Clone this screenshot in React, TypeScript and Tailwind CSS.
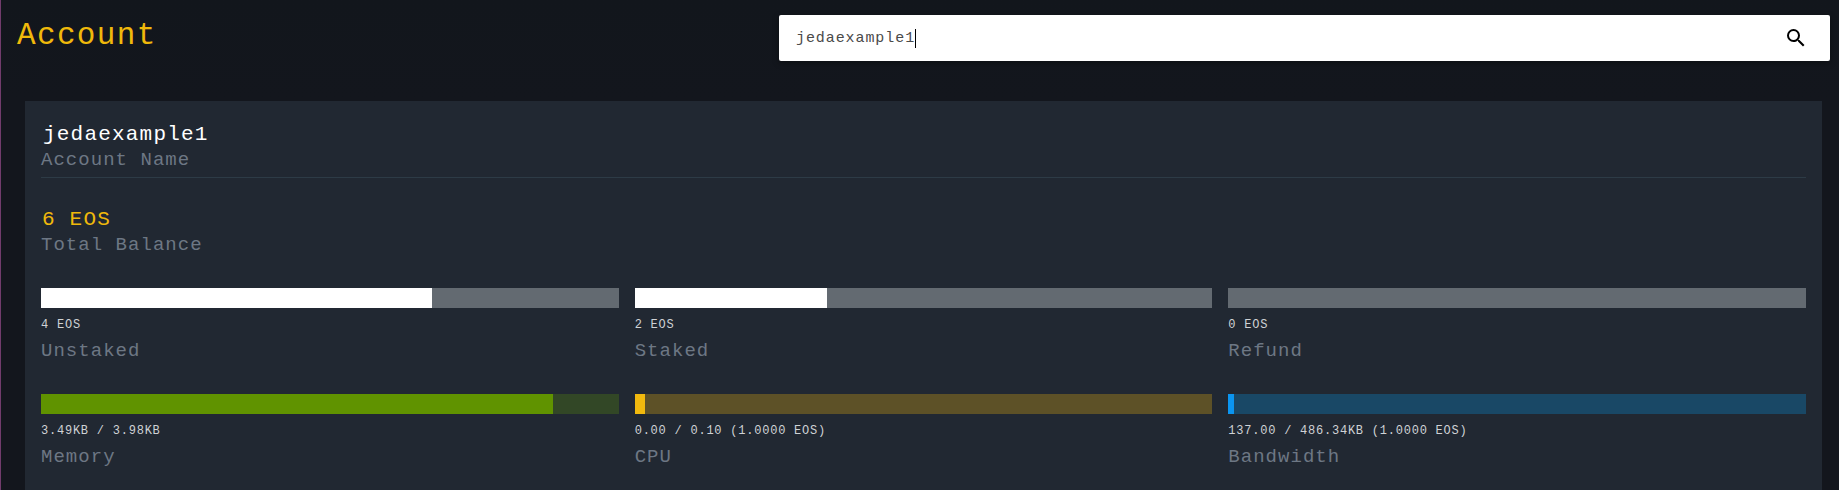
import { MdSearch } from "react-icons/md";

type Meter = {
  label: string;
  value: string;
  track: string;
  fill: string;
  width: string;
};

const meters: Meter[] = [
  { label: "Unstaked", value: "4 EOS", track: "bg-[#636a71]", fill: "bg-white", width: "w-[391px]" },
  { label: "Staked", value: "2 EOS", track: "bg-[#636a71]", fill: "bg-white", width: "w-[192px]" },
  { label: "Refund", value: "0 EOS", track: "bg-[#636a71]", fill: "bg-white", width: "w-0" },
  { label: "Memory", value: "3.49KB / 3.98KB", track: "bg-[#324726]", fill: "bg-[#609300]", width: "w-[512px]" },
  { label: "CPU", value: "0.00 / 0.10 (1.0000 EOS)", track: "bg-[#5d5127]", fill: "bg-[#f1b90e]", width: "w-[10px]" },
  { label: "Bandwidth", value: "137.00 / 486.34KB (1.0000 EOS)", track: "bg-[#194866]", fill: "bg-[#0b95f0]", width: "w-[6px]" },
];

function Label({ children }: { children: string }) {
  return (
    <div className="text-[19px] leading-[26px] tracking-[1.03px] text-[#6d7784]">{children}</div>
  );
}

function MeterCell({ meter }: { meter: Meter }) {
  return (
    <div className="h-[106px]">
      <div className={`h-5 ${meter.track}`}>
        <div className={`h-full ${meter.fill} ${meter.width}`} />
      </div>
      <div className="mt-2 text-[12px] leading-[18px] tracking-[0.77px] whitespace-pre text-[#cfd2d5]">
        {meter.value}
      </div>
      <div className="mt-1">
        <Label>{meter.label}</Label>
      </div>
    </div>
  );
}

export default function App() {
  return (
    <div className="h-[490px] overflow-hidden border-l border-[#713c6c] bg-[#13161d] font-['Courier_New','Liberation_Mono',monospace]">
      <header className="flex h-[101px] items-start justify-between bg-linear-to-b from-[#12161c] to-[#13161d] pr-[9px] pl-4">
        <h1 className="mt-4 text-[31px] leading-[40px] tracking-[1.35px] text-[#f0b90b]">Account</h1>
        <div className="mt-[15px] flex h-[46px] w-[1051px] items-center rounded-[2px] bg-white pr-[22px] pl-[17px] shadow-[0_2px_6px_rgba(0,0,0,0.4)]">
          <span className="pt-0.5 text-[15px] leading-5 tracking-[0.92px] text-[#4a4a4a]">jedaexample1</span>
          <span className="h-[19px] w-px bg-black" />
          <MdSearch className="ml-auto size-6 text-black" />
        </div>
      </header>
      <main className="mr-[17px] ml-6 h-[389px] bg-[#212832] px-4">
        <section className="h-[77px] border-b border-[#2d3b46] pt-5">
          <div className="text-[21px] leading-7 tracking-[1.2px] text-white">
            <span className="ml-0.5">jedaexample1</span>
          </div>
          <div className="-mt-0.5">
            <Label>Account Name</Label>
          </div>
        </section>
        <section className="h-[110px] pt-7">
          <div className="text-[21px] leading-7 tracking-[1.2px] text-[#f0b90b]">
            <span className="ml-px">6 EOS</span>
          </div>
          <div className="-mt-0.5">
            <Label>Total Balance</Label>
          </div>
        </section>
        <section className="grid grid-cols-3 gap-x-4">
          {meters.map((meter) => (
            <MeterCell key={meter.label} meter={meter} />
          ))}
        </section>
      </main>
    </div>
  );
}
